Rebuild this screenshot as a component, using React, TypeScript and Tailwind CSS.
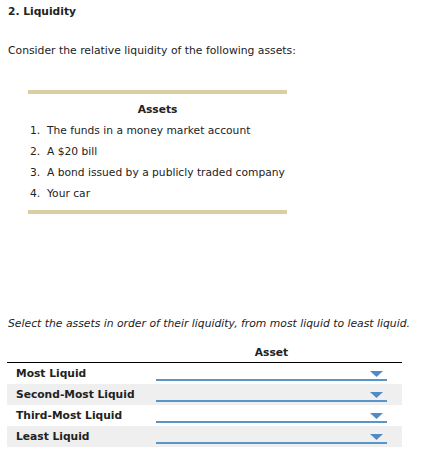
import React from 'react';

const assets = [
  'The funds in a money market account',
  'A $20 bill',
  'A bond issued by a publicly traded company',
  'Your car',
];

const ranks = ['Most Liquid', 'Second-Most Liquid', 'Third-Most Liquid', 'Least Liquid'];

const Dropdown: React.FC = () => (
  <div className="relative h-[21px] w-[231px]">
    <svg
      className="absolute right-[4px] top-[8px]"
      width="13"
      height="6"
      viewBox="0 0 13 6"
    >
      <polygon points="0,0 13,0 6.5,6" fill="#4f8cc6" />
    </svg>
    <div className="absolute bottom-[3px] left-0 right-0 h-[2px] bg-[#5895c9]" />
  </div>
);

const App: React.FC = () => {
  return (
    <div className="w-[442px] h-[469px] bg-white px-2 pt-[5px] font-['DejaVu_Sans',sans-serif] text-[#222]">
      {/* question title */}
      <h2 className="text-[10.7px] font-bold leading-[14px]">2. Liquidity</h2>

      <p className="mt-[25px] text-[10.8px] leading-[14px]">
        Consider the relative liquidity of the following assets:
      </p>

      {/* asset list */}
      <div className="ml-5 mt-[32px] w-[259px] border-y-4 border-[#d9cea1] pt-[9px] pb-[5px]">
        <div className="text-center text-[10.7px] font-bold leading-[14px]">Assets</div>
        <ol className="mt-[4px] text-[10.7px] whitespace-nowrap">
          {assets.map((a, i) => (
            <li key={a} className="flex h-[21px] items-center pl-[2px]">
              <span className="w-[17px] shrink-0">{i + 1}.</span>
              <span>{a}</span>
            </li>
          ))}
        </ol>
      </div>

      <p className="mt-[103px] text-[10.8px] italic leading-[14px]">
        Select the assets in order of their liquidity, from most liquid to least liquid.
      </p>

      {/* ranking table */}
      <table className="-ml-px mt-[15px] w-[395px] border-collapse">
        <thead>
          <tr className="border-b border-black">
            <th className="w-[149px]" />
            <th className="h-[16px] pb-[2px] text-center text-[10.7px] font-bold leading-[14px]">Asset</th>
            <th className="w-[15px]" />
          </tr>
        </thead>
        <tbody>
          {ranks.map((r, i) => (
            <tr key={r} className={i % 2 === 1 ? 'bg-[#efefef]' : 'bg-white'}>
              <td className="h-[21px] pl-[9px] text-[10.7px] font-bold leading-[14px]">{r}</td>
              <td className="p-0">
                <Dropdown />
              </td>
              <td />
            </tr>
          ))}
        </tbody>
      </table>
    </div>
  );
};

export default App;
